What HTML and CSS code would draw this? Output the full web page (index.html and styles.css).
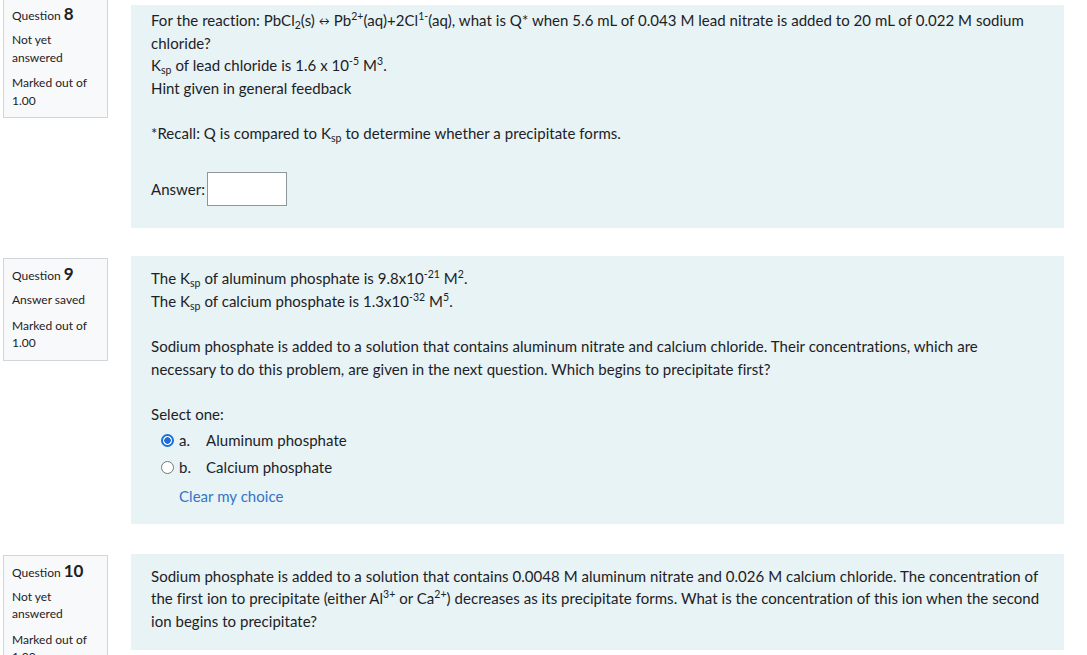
FILE: index.html
```html
<!DOCTYPE html>
<html lang="en">
<head>
<meta charset="utf-8">
<title>Quiz</title>
<link rel="stylesheet" href="styles.css">
</head>
<body>
<div class="page">

  <div class="que que-first">
    <div class="info">
      <h3 class="qno">Question <span class="num">8</span></h3>
      <div class="state">Not yet answered</div>
      <div class="grade">Marked out of 1.00</div>
    </div>
    <div class="content content-first">
      <p class="line">For the reaction: PbCl<sub>2</sub>(s) <span class="arrow">↔</span> Pb<sup>2+</sup>(aq)+2Cl<sup>1-</sup>(aq), what is Q* when 5.6 mL of 0.043 M lead nitrate is added to 20 mL of 0.022 M sodium chloride?</p>
      <p class="line">K<sub>sp</sub> of lead chloride is 1.6 x 10<sup>-5</sup> M<sup>3</sup>.</p>
      <p class="line">Hint given in general feedback</p>
      <p class="line recall">*Recall: Q is compared to K<sub>sp</sub> to determine whether a precipitate forms.</p>
      <div class="answer-row">
        <label class="answer-label" for="ans8">Answer:</label>
        <input class="answer-input" id="ans8" type="text">
      </div>
    </div>
  </div>

  <div class="que que-nine">
    <div class="info">
      <h3 class="qno">Question <span class="num">9</span></h3>
      <div class="state">Answer saved</div>
      <div class="grade">Marked out of 1.00</div>
    </div>
    <div class="content content-nine">
      <p class="line">The K<sub>sp</sub> of aluminum phosphate is 9.8x10<sup>-21</sup> M<sup>2</sup>.</p>
      <p class="line">The K<sub>sp</sub> of calcium phosphate is 1.3x10<sup>-32</sup> M<sup>5</sup>.</p>
      <p class="line para">Sodium phosphate is added to a solution that contains aluminum nitrate and calcium chloride. Their concentrations, which are necessary to do this problem, are given in the next question. Which begins to precipitate first?</p>
      <p class="line para">Select one:</p>
      <div class="options">
        <label class="option">
          <span class="radio checked"></span>
          <span class="opt-letter">a.</span>
          <span class="opt-text">Aluminum phosphate</span>
        </label>
        <label class="option">
          <span class="radio"></span>
          <span class="opt-letter">b.</span>
          <span class="opt-text">Calcium phosphate</span>
        </label>
      </div>
      <a class="clear" href="#">Clear my choice</a>
    </div>
  </div>

  <div class="que que-ten">
    <div class="info">
      <h3 class="qno">Question <span class="num">10</span></h3>
      <div class="state">Not yet answered</div>
      <div class="grade">Marked out of 1.00</div>
    </div>
    <div class="content content-ten">
      <p class="line">Sodium phosphate is added to a solution that contains 0.0048 M aluminum nitrate and 0.026 M calcium chloride. The concentration of the first ion to precipitate (either Al<sup>3+</sup> or Ca<sup>2+</sup>) decreases as its precipitate forms. What is the concentration of this ion when the second ion begins to precipitate?</p>
    </div>
  </div>

</div>
</body>
</html>
```

FILE: styles.css
```css
html, body {
  margin: 0;
  padding: 0;
  background: #ffffff;
}

body {
  font-family: Lato, "Open Sans", "Liberation Sans", sans-serif;
  color: #1d2125;
  font-size: 15px;
  line-height: 22.5px;
  overflow: hidden;
}

.page {
  padding-left: 3px;
  width: 1061px;
}

.que {
  display: flex;
  align-items: flex-start;
  gap: 23px;
}

.que-first {
  margin-top: -2px;
}

.que-nine {
  margin-top: 28px;
}

.que-ten {
  margin-top: 30px;
}

.info {
  flex: 0 0 auto;
  width: 88px;
  padding: 4px 7px 8px 8px;
  background: #f8f9fa;
  border: 1px solid #d2d6db;
  font-size: 12px;
  line-height: 17.5px;
  color: #1d2125;
}

.que-nine .info {
  margin-top: 2px;
}

.que-ten .info {
  margin-top: 1px;
}

.qno {
  margin: 0;
  font-size: 12px;
  font-weight: normal;
  line-height: 22px;
}

.num {
  font-size: 17px;
  font-weight: bold;
}

.state {
  margin-top: 4px;
}

.grade {
  margin-top: 8px;
}

.content {
  flex: 1 1 auto;
  background: #e7f3f5;
  padding: 11px 20px 18px 20px;
  letter-spacing: 0.04px;
}

.content-first {
  margin-top: 7px;
  padding-top: 4px;
  padding-bottom: 22px;
}

.content-nine {
  padding-bottom: 16px;
}

.content-ten {
  padding-top: 11px;
}

.line {
  margin: 0;
}

sub, sup {
  font-size: 10.5px;
  line-height: 0;
  position: relative;
  vertical-align: baseline;
}

sup {
  top: -0.55em;
}

sub {
  top: 0.3em;
}

.arrow {
  font-size: 11px;
  line-height: 0;
  position: relative;
  top: -1px;
}

.recall {
  margin-top: 22.5px;
}

.para {
  margin-top: 23px;
}

.answer-row {
  display: flex;
  align-items: center;
  gap: 2px;
  margin-top: 28px;
}

.answer-input {
  width: 80px;
  height: 34px;
  box-sizing: border-box;
  border: 1px solid #8f959e;
  background: #ffffff;
  margin: 0;
  padding: 0 6px;
  font: inherit;
}

.options {
  margin-top: 1px;
}

.option {
  display: flex;
  align-items: center;
  height: 27px;
  padding-left: 10px;
}

.radio {
  width: 13px;
  height: 13px;
  box-sizing: border-box;
  border: 1px solid #767676;
  border-radius: 50%;
  background: #ffffff;
  margin-right: 5px;
  flex: 0 0 auto;
}

.radio.checked {
  border: 2px solid #1a6fdc;
  background: radial-gradient(circle, #1a6fdc 0 3px, #ffffff 3.5px);
}

.opt-letter {
  width: 27px;
}

.clear {
  display: block;
  margin-top: 4.5px;
  padding-left: 28px;
  color: #3573c6;
  text-decoration: none;
}
```
